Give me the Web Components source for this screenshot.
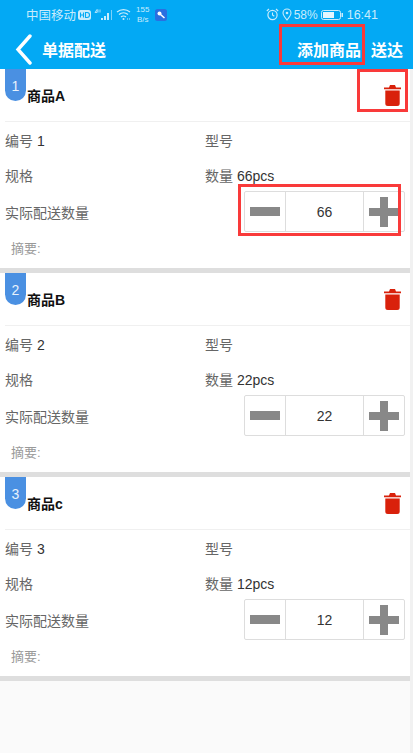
<!DOCTYPE html>
<html lang="zh">
<head>
<meta charset="utf-8">
<title>单据配送</title>
<style>
  html, body { margin: 0; padding: 0; }
  body {
    width: 413px;
    height: 753px;
    overflow: hidden;
    background: #fafafa;
    font-family: "Liberation Sans", "Noto Sans CJK SC", sans-serif;
  }
</style>
</head>
<body>
<delivery-page>
  <status-bar></status-bar>
  <app-header title="单据配送"></app-header>
  <goods-card index="1" name="商品A" code="1" qty="66" marked></goods-card>
  <goods-card index="2" name="商品B" code="2" qty="22"></goods-card>
  <goods-card index="3" name="商品c" code="3" qty="12"></goods-card>
</delivery-page>

<script>
class DeliveryPage extends HTMLElement {
  constructor() {
    super();
    this.attachShadow({mode: 'open'}).innerHTML = `
      <style>
        :host { display: block; position: relative; width: 413px; height: 753px; }
        .strip { position: absolute; top: 69px; right: 0; bottom: 0; width: 3px; background: #f1f1f1; }
      </style>
      <slot></slot>
      <div class="strip"></div>
    `;
  }
}

class StatusBar extends HTMLElement {
  constructor() {
    super();
    this.attachShadow({mode: 'open'}).innerHTML = `
      <style>
        :host {
          display: flex;
          align-items: center;
          justify-content: space-between;
          box-sizing: border-box;
          height: 29px;
          padding: 0 35px 0 26px;
          background: #03a9f4;
          color: #c9ecfc;
          font-size: 12px;
        }
        .side { display: flex; align-items: center; }
        svg { display: block; flex: none; }
        .carrier { font-size: 12.5px; width: 52px; white-space: nowrap; }
        .speed { font-size: 8px; line-height: 10px; text-align: center; margin: 0 6px 0 4px; }
        .pct { margin: 0 3px 0 2px; font-size: 12px; }
        .time { font-size: 12.5px; margin-left: 4px; }
      </style>
      <div class="side">
        <span class="carrier">中国移动</span>
        <svg width="13" height="10" viewBox="0 0 13 10"><rect width="13" height="10" rx="2.5" fill="#c9ecfc"/><path d="M2.5 2.5v5M5.5 2.5v5M2.5 5h3M7.5 2.5v5h1.5a2.5 2.5 0 0 0 0-5z" stroke="#03a9f4" stroke-width="1.1" fill="none"/></svg>
        <svg width="20" height="14" viewBox="0 0 20 14" style="margin-left:3px"><path d="M1 4.5l2-3v3zM4 1.5v3M6 1.5v3" stroke="#c9ecfc" stroke-width=".8" fill="none"/><path d="M7 12h2v-2H7zM10 12h2V8h-2zM13 12h2V5h-2z" fill="#c9ecfc"/><path d="M17 12h1V2h-1z" fill="#7fd0f7"/></svg>
        <svg width="16" height="13" viewBox="0 0 16 13" style="margin-left:2px"><path d="M1 4a10 10 0 0 1 13 0M3 6.5a7 7 0 0 1 9 0M5 9a4 4 0 0 1 5 0" stroke="#c9ecfc" stroke-width="1.2" fill="none"/><circle cx="7.5" cy="11" r="1" fill="#c9ecfc"/><path d="M11 11h4" stroke="#c9ecfc" stroke-width="1" stroke-dasharray="1 1"/></svg>
        <div class="speed">155<br>B/s</div>
        <svg width="12" height="12" viewBox="0 0 12 12"><rect width="12" height="12" rx="2.5" fill="#2a6fe0"/><circle cx="4.5" cy="4.5" r="2" fill="#fff"/><path d="M5.5 5.5l4 3.5" stroke="#fff" stroke-width="1.6"/></svg>
      </div>
      <div class="side">
        <svg width="13" height="13" viewBox="0 0 13 13"><circle cx="6.5" cy="7" r="4.6" stroke="#c9ecfc" stroke-width="1.2" fill="none"/><path d="M6.5 4.5V7l1.8 1.2M.8 3L3 1M12.2 3L10 1" stroke="#c9ecfc" stroke-width="1.1" fill="none"/></svg>
        <svg width="10" height="13" viewBox="0 0 10 13" style="margin-left:3px"><path d="M5 12C2.5 9 1 7 1 5a4 4 0 0 1 8 0c0 2-1.500 4-4 7z" stroke="#c9ecfc" stroke-width="1.1" fill="none"/><circle cx="5" cy="5" r="1.300" fill="#c9ecfc"/></svg>
        <span class="pct">58%</span>
        <svg width="22" height="10" viewBox="0 0 22 10"><rect x=".5" y=".5" width="19" height="9" rx="2" stroke="#c9ecfc" fill="none"/><rect x="2" y="2" width="11" height="6" fill="#e6f6fe"/><rect x="20.500" y="3" width="1.500" height="4" fill="#c9ecfc"/></svg>
        <span class="time">16:41</span>
      </div>
    `;
  }
}

class AppHeader extends HTMLElement {
  constructor() {
    super();
    const title = this.getAttribute('title');
    this.attachShadow({mode: 'open'}).innerHTML = `
      <style>
        :host {
          display: flex;
          align-items: center;
          position: relative;
          box-sizing: border-box;
          height: 40px;
          padding: 0 10px 0 15px;
          background: #03a9f4;
          color: #fff;
          font-size: 16px;
          font-weight: bold;
        }
        svg { display: block; }
        .title { margin-left: 10px; flex: 1; }
        .add { margin-right: 10px; }
        .mark { position: absolute; left: 279px; top: -5px; width: 86px; height: 41px; box-sizing: border-box; border: 3px solid #f93a3a; }
      </style>
      <svg width="17" height="31" viewBox="0 0 17 31"><path d="M15 2L3 15.500 15 29" stroke="#fff" stroke-width="3.400" fill="none" stroke-linecap="round"/></svg>
      <span class="title">${title}</span>
      <span class="add">添加商品</span>
      <span>送达</span>
      <div class="mark"></div>
    `;
  }
}

class QtyStepper extends HTMLElement {
  constructor() {
    super();
    const value = this.getAttribute('value');
    this.attachShadow({mode: 'open'}).innerHTML = `
      <style>
        :host {
          display: grid;
          grid-template-columns: 40px 1fr 40px;
          box-sizing: border-box;
          width: 161px;
          height: 41px;
          border: 1px solid #ddd;
          border-radius: 2px;
          background: #fff;
          color: #333;
          font-size: 14px;
        }
        div { display: flex; align-items: center; justify-content: center; }
        .val { border-left: 1px solid #ddd; border-right: 1px solid #ddd; }
        svg { display: block; }
      </style>
      <div><svg width="30" height="9" viewBox="0 0 30 9"><rect width="30" height="9" fill="#888"/></svg></div>
      <div class="val">${value}</div>
      <div><svg width="30" height="30" viewBox="0 0 30 30"><path d="M11 0h8v11h11v8H19v11h-8V19H0v-8h11z" fill="#888"/></svg></div>
    `;
  }
}

class GoodsCard extends HTMLElement {
  constructor() {
    super();
    const index = this.getAttribute('index');
    const name = this.getAttribute('name');
    const code = this.getAttribute('code');
    const qty = this.getAttribute('qty');
    const marks = this.hasAttribute('marked') ? '<div class="mark del"></div><div class="mark step"></div>' : '';
    this.attachShadow({mode: 'open'}).innerHTML = `
      <style>
        :host {
          display: block;
          position: relative;
          box-sizing: border-box;
          width: 410px;
          height: 204px;
          background: #fff;
          border-bottom: 5px solid #dedede;
          color: #333;
          font-size: 14px;
        }
        .head {
          display: flex;
          align-items: center;
          box-sizing: border-box;
          height: 53px;
          margin-left: 5px;
          border-bottom: 1px solid #f0f0f0;
          padding-right: 9px;
        }
        .badge {
          position: absolute;
          left: 5px;
          top: 0;
          width: 21px;
          height: 32px;
          padding-top: 9px;
          box-sizing: border-box;
          border-radius: 0 0 11px 11px;
          background: #4a90e2;
          color: #e8f2fc;
          font-size: 14px;
          text-align: center;
        }
        .name { margin: 0 0 0 22px; flex: 1; font-size: 14px; font-weight: bold; color: #111; }
        .row { display: grid; grid-template-columns: 200px 1fr; align-items: center; padding-left: 5px; height: 35px; }
        .lbl { color: #666; }
        .qty-row { display: flex; align-items: center; justify-content: space-between; height: 41px; padding: 0 5px; margin-top: -1px; }
        .note { padding: 10px 0 0 11px; color: #999; font-size: 13px; line-height: 14px; }
        svg { display: block; }
        .mark { position: absolute; box-sizing: border-box; border: 3px solid #f93a3a; }
        .del { left: 357px; top: 0; width: 51px; height: 43px; }
        .step { left: 238px; top: 115px; width: 163px; height: 52px; }
      </style>
      <div class="badge">${index}</div>
      <div class="head">
        <p class="name">${name}</p>
        <svg width="17" height="22" viewBox="0 0 17 22"><path d="M0 3.500h17v1.800H0zM5 3.500L6 1h5l1 2.500z" fill="#d9210b"/><path d="M1.300 6.500h14.400v13a2.500 2.500 0 0 1-2.500 2.500H3.800a2.500 2.500 0 0 1-2.500-2.500z" fill="#d9210b"/></svg>
      </div>
      <div class="row"><span><span class="lbl">编号</span> ${code}</span><span class="lbl">型号</span></div>
      <div class="row"><span class="lbl">规格</span><span><span class="lbl">数量</span> ${qty}pcs</span></div>
      <div class="qty-row"><span class="lbl">实际配送数量</span><qty-stepper value="${qty}"></qty-stepper></div>
      <div class="note">摘要:</div>
      ${marks}
    `;
  }
}

customElements.define('delivery-page', DeliveryPage);
customElements.define('status-bar', StatusBar);
customElements.define('app-header', AppHeader);
customElements.define('qty-stepper', QtyStepper);
customElements.define('goods-card', GoodsCard);
</script>
</body>
</html>
